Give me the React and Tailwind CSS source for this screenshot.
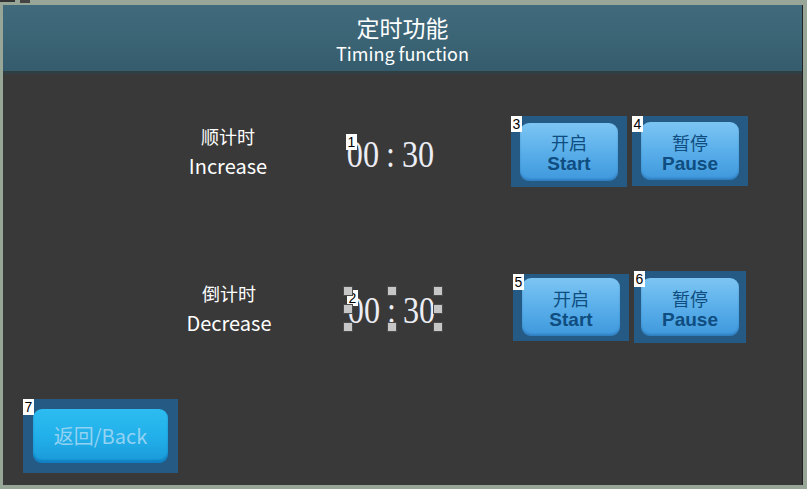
const cjk = { fontFamily: '"Noto Sans CJK SC", "Noto Sans", sans-serif' };

const Tag = ({ n }) => (
  <span
    className="absolute left-0 top-0 bg-white text-black text-[14px] leading-[16px] px-[1px] min-w-[11px] text-center"
    style={{ fontFamily: '"Liberation Sans", Arial, sans-serif' }}
  >
    {n}
  </span>
);

const Handle = ({ cls }) => (
  <div className={"absolute w-[8px] h-[8px] bg-[#c6c6c6] outline outline-1 outline-[#4a4a4a] " + cls} />
);

const TimerText = ({ n, selected }) => (
  <div className="relative w-[92px] h-[40px] flex items-center">
    <span
      className="block text-[37px] leading-none text-[#ecedf5] pl-[1px] scale-x-87 origin-left whitespace-nowrap"
      style={{ fontFamily: '"Liberation Serif", "Times New Roman", serif' }}
    >
      00<span className="mx-[8px]">:</span>30
    </span>
    <Tag n={n} />
    {selected && (
      <>
        <Handle cls="left-[-3px] top-[-3px]" />
        <Handle cls="left-[41px] top-[-3px]" />
        <Handle cls="left-[87px] top-[-3px]" />
        <Handle cls="left-[-3px] top-[15px]" />
        <Handle cls="left-[87px] top-[15px]" />
        <Handle cls="left-[-3px] top-[33px]" />
        <Handle cls="left-[41px] top-[33px]" />
        <Handle cls="left-[87px] top-[33px]" />
      </>
    )}
  </div>
);

const BlueButton = ({ n, zh, en, h = "h-[71px]", inner = "h-[58px]", w = "w-[116px]" }) => (
  <div className={"relative bg-[#255a84] flex items-center justify-center " + w + " " + h}>
    <div
      className={
        "w-[98px] rounded-[9px] bg-gradient-to-b from-[#7cc5f3] via-[#5aafea] to-[#3e98dc] shadow-[inset_0_-2px_2px_rgba(20,80,140,0.35)] flex flex-col items-center justify-center pt-[3px] text-[#0f4d80] " +
        inner
      }
    >
      <span className="text-[18px] leading-[22px]" style={cjk}>
        {zh}
      </span>
      <span
        className="text-[19px] leading-[22px] font-bold"
        style={{ fontFamily: '"Liberation Sans", Arial, sans-serif' }}
      >
        {en}
      </span>
    </div>
    <Tag n={n} />
  </div>
);

const Label = ({ zh, en }) => (
  <div className="w-[120px] flex flex-col items-center text-white" style={cjk}>
    <span className="text-[18px] leading-[30px]">{zh}</span>
    <span className="text-[20px] leading-[30px]">{en}</span>
  </div>
);

export default function App() {
  return (
    <div className="relative w-[807px] h-[489px] bg-[#98a698] overflow-hidden">
      {/* window marks */}
      <div className="absolute left-0 top-0 w-[15px] h-[2px] bg-[#333]" />
      <div className="absolute left-[20px] top-0 w-[10px] h-[3px] bg-[#444]" />

      <div className="absolute left-[3px] top-[5px] w-[800px] h-[480px] bg-[#393939] border-r border-[#222] flex flex-col">
        {/* HEADER */}
        <div className="h-[69px] bg-gradient-to-b from-[#416b7d] via-[#3b6475] to-[#355c6c] flex flex-col items-center text-white border-b-[3px] border-[#2f3f44]">
          <span className="text-[23px] leading-[30px] mt-[7px]" style={cjk}>
            定时功能
          </span>
          <span className="text-[18px] leading-[22px]" style={cjk}>
            Timing function
          </span>
        </div>

        {/* ROW 1 */}
        <div className="flex items-center h-[72px] mt-[41px]">
          <div className="ml-[165px]">
            <Label zh="顺计时" en="Increase" />
          </div>
          <div className="ml-[58px] mt-[6px]">
            <TimerText n="1" />
          </div>
          <div className="ml-[73px] mt-[1px]">
            <BlueButton n="3" zh="开启" en="Start" />
          </div>
          <div className="ml-[5px]">
            <BlueButton n="4" zh="暂停" en="Pause" h="h-[70px]" />
          </div>
        </div>

        {/* ROW 2 */}
        <div className="flex items-center h-[72px] mt-[84px]">
          <div className="ml-[166px] mt-[2px]">
            <Label zh="倒计时" en="Decrease" />
          </div>
          <div className="ml-[58px] mt-[6px]">
            <TimerText n="2" selected />
          </div>
          <div className="ml-[74px]">
            <BlueButton n="5" zh="开启" en="Start" h="h-[67px]" />
          </div>
          <div className="ml-[5px]">
            <BlueButton n="6" zh="暂停" en="Pause" h="h-[72px]" w="w-[112px]" />
          </div>
        </div>

        {/* BACK */}
        <div className="ml-[20px] mt-[56px] relative w-[155px] h-[74px] bg-[#255a84] flex items-center justify-center">
          <div className="w-[135px] h-[54px] rounded-[9px] bg-gradient-to-b from-[#2dbcf0] via-[#22b0ea] to-[#1a9ad8] shadow-[inset_0_-3px_2px_rgba(10,110,180,0.6)] flex items-center justify-center">
            <span className="text-[20px] text-[#93d2f2]" style={cjk}>
              返回/Back
            </span>
          </div>
          <Tag n="7" />
        </div>
      </div>
    </div>
  );
}
